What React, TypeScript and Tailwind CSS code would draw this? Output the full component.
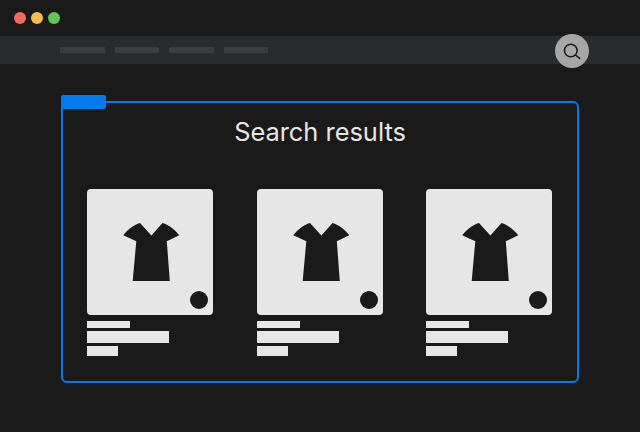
const navItems = [0, 1, 2, 3];
const products = [0, 1, 2];

function ProductCard() {
  return (
    <div className="w-[126px]">
      <div className="relative h-[126px] w-[126px] rounded-[4px] bg-[#e6e6e6]">
        <svg className="h-full w-full" viewBox="0 0 126 126" fill="#1a1a1a">
          <path d="M36.3 46.3C40.5 40.5 46.5 36 53 34L64.4 46.5L75.5 34C82 36 88 40.5 92.3 46.3L79.8 52.3L82.8 92H45.7L49.3 52.3Z" />
        </svg>
        <div className="absolute right-[5px] bottom-[6px] h-[18px] w-[18px] rounded-full bg-[#1a1a1a]" />
      </div>
      <div className="mt-[6px] h-[7px] w-[43px] bg-[#e6e6e6]" />
      <div className="mt-[3px] h-[12px] w-[82px] bg-[#e6e6e6]" />
      <div className="mt-[3px] h-[10px] w-[31px] bg-[#e6e6e6]" />
    </div>
  );
}

export default function App() {
  return (
    <div className="relative h-[432px] w-[640px] overflow-hidden bg-[#1a1a1a] font-['Inter',sans-serif]">
      <div className="flex h-9 items-center gap-[4.4px] pl-[13.7px]">
        <span className="h-[12.6px] w-[12.6px] rounded-full bg-[#f1695f]" />
        <span className="h-[12.6px] w-[12.6px] rounded-full bg-[#f6bd4f]" />
        <span className="h-[12.6px] w-[12.6px] rounded-full bg-[#62c554]" />
      </div>

      <div className="relative flex h-7 items-center gap-[10px] bg-[#2a2b2d] pl-[60px]">
        {navItems.map(i => (
          <div key={i} className="h-[6px] w-[44.5px] bg-[#3c3d3f]" />
        ))}
        <button className="absolute top-[-2px] left-[555px] flex h-[34px] w-[34px] items-center justify-center rounded-full bg-[#a6a6a6]">
          <svg className="h-[20px] w-[20px]" viewBox="0 0 20 20" fill="none" stroke="#1a1a1a" strokeWidth="1.6" strokeLinecap="round">
            <circle cx="8.8" cy="9.5" r="6.3" />
            <path d="M13.5 14L17.6 17.4" />
          </svg>
        </button>
      </div>

      <div className="relative mt-[37px] ml-[61px] h-[282px] w-[518px] rounded-[6px] border-2 border-[#0a7ae8] px-[24px]">
        <div className="absolute top-[-8px] left-[-2px] h-[14px] w-[45px] rounded-[2px] bg-[#007bf0]" />
        <h1 className="mt-[12px] text-center text-[25.4px] leading-[34px] font-normal text-[#e6e6e6]">Search results</h1>
        <div className="mt-[40px] flex gap-[43.6px]">
          {products.map(i => (
            <ProductCard key={i} />
          ))}
        </div>
      </div>
    </div>
  );
}
